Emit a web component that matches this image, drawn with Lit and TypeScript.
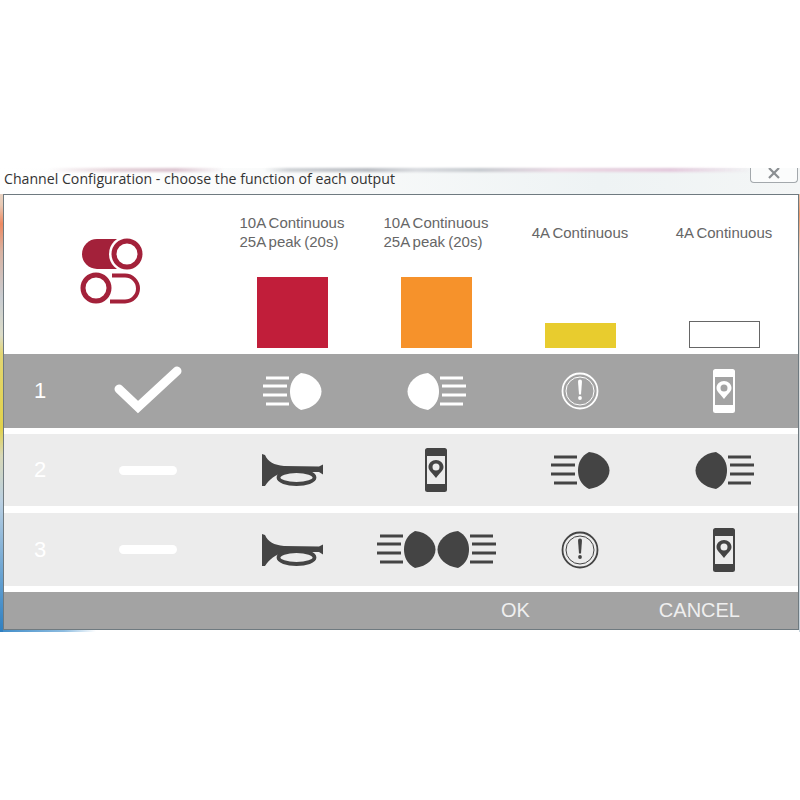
import { LitElement, html, css, svg } from "lit";
import { customElement } from "lit/decorators.js";

const lampShape = svg`
  <g fill="none" stroke="currentColor" stroke-width="2.800">
    <path d="M3 5H26M0 13H24M0 22H24M3 31H26"/>
  </g>
  <path fill="currentColor" d="M38 0C50 1 58.500 10 58.500 18.500C58.500 27 50 35.500 38 37C29.500 33 27 25 27 18.500C27 11 30 4 38 0Z"/>`;

const lamp = (flip = false) => html`<svg class="lamp" width="59" height="37" viewBox="0 0 59 37">
  <g transform=${flip ? "translate(59 0) scale(-1 1)" : ""}>${lampShape}</g>
</svg>`;

const horn = () => html`<svg width="61" height="32" viewBox="0 0 61 32">
  <path fill="currentColor" d="M0 0L3 1C6 8 12 11 22 12L57 12.500L61 10.500V20.500L57 18H24C13 20 7 26 3 32H0Z"/>
  <ellipse cx="34.500" cy="23.500" rx="18" ry="6.500" fill="none" stroke="currentColor" stroke-width="3.800"/>
</svg>`;

const phone = () => html`<svg width="22" height="44" viewBox="0 0 22 44">
  <path fill="currentColor" fill-rule="evenodd" d="M2.500 0H19.500A2.500 2.500 0 0 1 22 2.500V41.500A2.500 2.500 0 0 1 19.500 44H2.500A2.500 2.500 0 0 1 0 41.500V2.500A2.500 2.500 0 0 1 2.500 0ZM2 8V36H20V8Z"/>
  <path fill="currentColor" fill-rule="evenodd" d="M11 12C7 12 3.500 15 3.500 19C3.500 23 8 25.500 11 30C14 25.500 18.500 23 18.500 19C18.500 15 15 12 11 12ZM11 15.500A3.500 3.500 0 1 1 11 22.500A3.500 3.500 0 1 1 11 15.500Z"/>
</svg>`;

const alert = () => html`<svg width="38" height="38" viewBox="0 0 38 38">
  <circle cx="19" cy="19" r="17.500" fill="none" stroke="currentColor" stroke-width="1.800"/>
  <circle cx="19" cy="19" r="14" fill="none" stroke="currentColor" stroke-width="1"/>
  <path fill="currentColor" d="M17 9.500A2 2 0 0 1 21 9.500L20 22.500H18Z"/>
  <circle cx="19" cy="26" r="1.900" fill="currentColor"/>
</svg>`;

const check = () => html`<svg width="68" height="50" viewBox="0 0 68 50">
  <path d="M5 23L24 41L63 5" fill="none" stroke="currentColor" stroke-width="9" stroke-linecap="round"/>
</svg>`;

const logo = () => html`<svg width="64" height="70" viewBox="0 0 64 70">
  <path fill="#a3213a" d="M17 3H38V33H17A15 15 0 0 1 17 3Z"/>
  <circle cx="47" cy="18" r="18" fill="#fff"/>
  <circle cx="47" cy="18" r="13" fill="none" stroke="#a3213a" stroke-width="5"/>
  <circle cx="16" cy="52" r="13" fill="none" stroke="#a3213a" stroke-width="5"/>
  <path d="M32 39.500H45A13 13 0 0 1 45 65.500H30" fill="none" stroke="#a3213a" stroke-width="4"/>
</svg>`;

type Cell = () => unknown;
const dash: Cell = () => html`<div class="dash"></div>`;
const double: Cell = () => html`<div class="pair">${lamp()}${lamp(true)}</div>`;
const high: Cell = () => lamp();
const low: Cell = () => lamp(true);

const ROWS: { n: string; tone: string; cells: Cell[] }[] = [
  { n: "1", tone: "dark r1", cells: [check, high, low, alert, phone] },
  { n: "2", tone: "light r2", cells: [dash, horn, phone, high, low] },
  { n: "3", tone: "light r3", cells: [dash, horn, double, alert, phone] },
];

const OUTPUTS: { lines: string[]; bar: string }[] = [
  { lines: ["10A Continuous", "25A peak (20s)"], bar: "bar tall red" },
  { lines: ["10A Continuous", "25A peak (20s)"], bar: "bar tall orange" },
  { lines: ["4A Continuous"], bar: "bar low yellow" },
  { lines: ["4A Continuous"], bar: "bar low outline" },
];

@customElement("app-root")
export class AppRoot extends LitElement {
  static styles = css`
    :host {
      display: block;
      width: 800px;
      height: 800px;
      background: #fff;
      padding-top: 168px;
      box-sizing: border-box;
      font-family: "Liberation Sans", Arial, sans-serif;
    }
    .frame {
      height: 464px;
      box-sizing: border-box;
      padding: 0 1px 2px 3px;
      background:
        linear-gradient(to bottom, #e9e7e2 0, #e8c9b4 8%, #ee8a62 12%, #d9b3a2 18%, #c9cdd2 28%, #dcdcc8 36%, #e3d672 40%, #e2d24a 56%, #d8d8b8 62%, #b9cfe2 72%, #5d9ccf 90%, #2f7fc0 100%) left / 3px 100% no-repeat,
        linear-gradient(to bottom, #eef1f3 0, #ef9a6a 10%, #e9dfd8 20%, #d6dde2 60%, #c6d3dc 100%) right / 1px 100% no-repeat,
        linear-gradient(to right, #3f8cc8 0, #8dbce0 8%, #ffffff 12%) bottom / 100% 2px no-repeat,
        #fff;
    }
    .title {
      position: relative;
      display: flex;
      align-items: flex-start;
      justify-content: space-between;
      height: 26px;
      margin-left: -3px;
      margin-right: -1px;
      background: linear-gradient(to right, #ffffff 0, #f9fafa 40%, #eef3f4 75%, #f4f6f6 100%);
    }
    .smear {
      position: absolute;
      inset: 0 0 auto 0;
      height: 4px;
      background: linear-gradient(
        to right,
        transparent 6%,
        #e6d3da 14%,
        #dcc4d0 22%,
        transparent 28%,
        transparent 33%,
        #cfd2d6 36%,
        #b9bcc2 46%,
        #d8dade 52%,
        #c7cacf 60%,
        #ecd9e4 70%,
        #e4c9dc 84%,
        transparent 94%
      );
      filter: blur(1px);
    }
    .caption {
      position: relative;
      margin: 2px 0 0 4px;
      font: 14.150px/18px "Open Sans", sans-serif;
      color: #333;
      white-space: nowrap;
    }
    .close {
      position: relative;
      box-sizing: border-box;
      width: 48px;
      height: 15px;
      margin-right: 2px;
      border: 1px solid #a3a8ac;
      border-top: none;
      border-radius: 0 0 4px 4px;
      background: #fbfcfc;
      display: flex;
      justify-content: center;
      align-items: flex-start;
      color: #8b8f92;
    }
    .panel {
      height: 436px;
      box-sizing: border-box;
      border: 1px solid #6f7a80;
      background: #fff;
      display: grid;
      grid-template-columns: 72px repeat(5, 144px) 2px;
      align-content: start;
    }
    .head {
      display: grid;
      grid-column: 1 / -1;
      grid-template-columns: subgrid;
      height: 159px;
    }
    .logo {
      grid-column: 1 / span 2;
      display: flex;
      justify-content: center;
      align-items: flex-start;
      padding-top: 41px;
    }
    .out {
      display: flex;
      flex-direction: column;
      align-items: center;
      justify-content: space-between;
      padding: 18px 0 6px;
      box-sizing: border-box;
      height: 159px;
    }
    .spec {
      min-height: 38px;
      display: flex;
      flex-direction: column;
      justify-content: center;
      font-size: 15px;
      line-height: 19px;
      color: #666;
      word-spacing: -1px;
      white-space: nowrap;
    }
    .bar { width: 71px; box-sizing: border-box; }
    .tall { height: 71px; }
    .low { height: 25px; }
    .red { background: #c11e3a; }
    .orange { background: #f6922b; }
    .yellow { background: #e8cc2e; }
    .outline { height: 27px; background: #fff; border: 1px solid #666; }
    .row {
      grid-column: 1 / -1;
      display: grid;
      grid-template-columns: subgrid;
      align-items: center;
      justify-items: center;
    }
    .dark { background: #a3a3a3; color: #fff; }
    .light { background: #ececec; color: #444; }
    .r1 { height: 74px; }
    .r2 { height: 72px; margin-top: 6px; }
    .r3 { height: 73px; margin-top: 7px; }
    .num {
      color: #fff;
      font-size: 22px;
      line-height: 1;
    }
    .dash {
      width: 58px;
      height: 9px;
      border-radius: 5px;
      background: #fff;
    }
    .pair { display: flex; gap: 1px; }
    svg { display: block; }
    .foot {
      grid-column: 1 / -1;
      background: #a3a3a3;
      color: #efefef;
      display: flex;
      justify-content: flex-end;
      align-items: center;
      gap: 129px;
      padding: 0 58px 0 0;
      font-size: 20px;
      margin-top: 6px;
      height: 37px;
    }
  `;

  render() {
    return html`
      <div class="frame">
        <div class="title">
          <div class="smear"></div>
          <div class="caption">Channel Configuration - choose the function of each output</div>
          <div class="close">
            <svg width="14" height="11" viewBox="0 0 14 11"><path d="M2 0L12 10M12 0L2 10" fill="none" stroke="currentColor" stroke-width="2.200"/></svg>
          </div>
        </div>
        <div class="panel">
          <div class="head">
            <div class="logo">${logo()}</div>
            ${OUTPUTS.map(
              (o) => html`<div class="out">
                <div class="spec">${o.lines.map((l) => html`<div>${l}</div>`)}</div>
                <div class=${o.bar}></div>
              </div>`
            )}
          </div>
          ${ROWS.map(
            (r) => html`<div class="row ${r.tone}">
              <div class="num">${r.n}</div>
              ${r.cells.map((c) => c())}
            </div>`
          )}
          <div class="foot"><span>OK</span><span>CANCEL</span></div>
        </div>
      </div>
    `;
  }
}
